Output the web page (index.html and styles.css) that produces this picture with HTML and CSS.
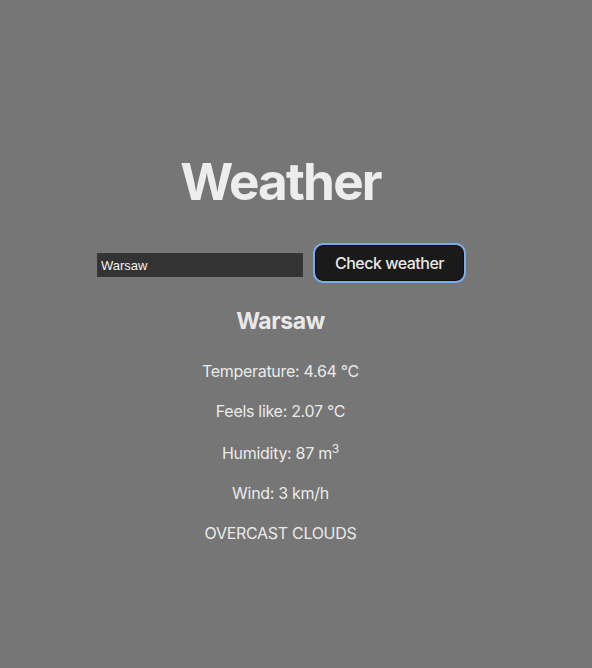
FILE: index.html
```html
<!DOCTYPE html>
<html lang="en">
<head>
<meta charset="utf-8">
<title>Weather</title>
<link rel="stylesheet" href="styles.css">
</head>
<body>
<main class="app">
  <h1 class="title">Weather</h1>
  <form class="search" onsubmit="return false">
    <input class="city-input" type="text" value="Warsaw">
    <button class="check-btn" type="submit">Check weather</button>
  </form>
  <section class="result">
    <h2 class="city">Warsaw</h2>
    <p class="line">Temperature: 4.64 °C</p>
    <p class="line">Feels like: 2.07 °C</p>
    <p class="line">Humidity: 87 m<sup>3</sup></p>
    <p class="line">Wind: 3 km/h</p>
    <p class="line">OVERCAST CLOUDS</p>
  </section>
</main>
</body>
</html>
```

FILE: styles.css
```css
html, body {
  margin: 0;
  padding: 0;
}

body {
  background: #767676;
  color: rgba(255, 255, 255, 0.87);
  font-family: Inter, "Noto Sans", sans-serif;
  font-size: 16px;
  line-height: 1.5;
  min-height: 668px;
}

.app {
  width: 561px;
  padding-top: 153px;
  text-align: center;
}

.title {
  margin: 0 0 36px;
  font-size: 51.2px;
  line-height: 56px;
  font-weight: 700;
  letter-spacing: -1.8px;
}

.search {
  display: flex;
  justify-content: center;
  align-items: center;
  gap: 12px;
  margin: 0;
}

.city-input {
  box-sizing: border-box;
  width: 206px;
  height: 24px;
  margin: 4px 0 0;
  padding: 0 3px;
  border: 1px solid #363636;
  background: #333333;
  color: #f2f2f2;
  font-family: "Liberation Sans", Arial, sans-serif;
  font-size: 13px;
}

.check-btn {
  box-sizing: border-box;
  width: 149px;
  height: 36px;
  margin: 0;
  padding: 0;
  border: 1px solid #0e0e0e;
  border-radius: 8px;
  background: #1a1a1a;
  color: rgba(255, 255, 255, 0.92);
  font-family: Inter, "Noto Sans", sans-serif;
  font-size: 16px;
  font-weight: 500;
  line-height: 19px;
  letter-spacing: -0.5px;
  white-space: nowrap;
  outline: 2px solid #78aef0;
  outline-offset: 0;
  cursor: pointer;
}

.result {
  margin-top: 23px;
}

.city {
  margin: 0 0 21px;
  font-size: 23px;
  line-height: 34px;
  font-weight: 700;
  letter-spacing: -0.4px;
}

.line {
  margin: 0 0 16px;
  font-size: 16px;
  line-height: 24px;
  letter-spacing: -0.3px;
}

.line sup {
  font-size: 12px;
  line-height: 20px;
}
```
